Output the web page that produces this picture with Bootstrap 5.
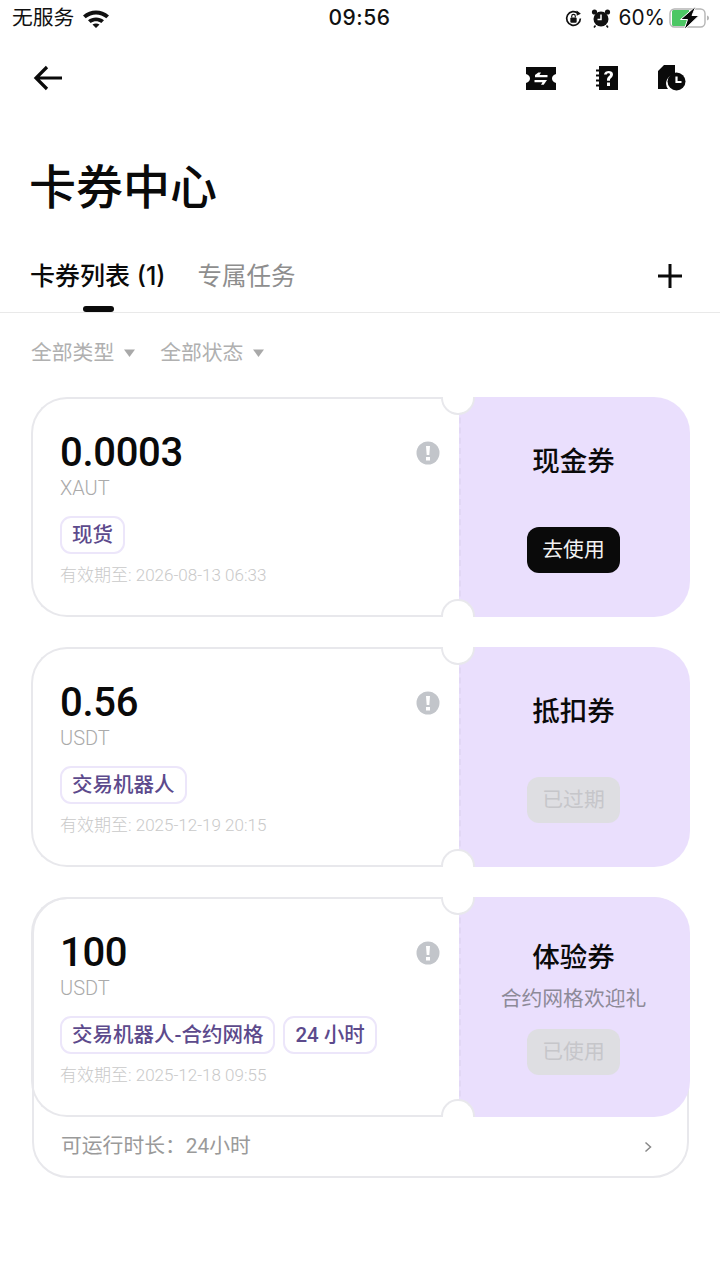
<!DOCTYPE html>
<html lang="zh-CN">
<head>
    <meta charset="UTF-8">
    <meta name="viewport" content="width=device-width, initial-scale=1.0">
    <title>卡券中心</title>
    <link href="https://cdn.jsdelivr.net/npm/bootstrap@5.3.0/dist/css/bootstrap.min.css" rel="stylesheet">
    <style>
        body {
            background-color: #fff;
            color: #0a0a0a;
            font-family: "Inter", "Noto Sans CJK SC", sans-serif;
        }
        .status-bar { height: 36px; padding: 0 9px 0 12px; font-size: 20.8px; color: #111; }
        .status-left { width: 276px; }
        .status-right { width: 280px; }
        .status-time { font-size: 21px; font-weight: 500; letter-spacing: .5px; }
        .top-nav { height: 84px; padding: 0 34px 0 33px; }
        .nav-icons { gap: 39px; }
        .page-title { font-size: 47px; font-weight: 500; line-height: 64px; margin: 35px 0 0 29px; }
        .tab-row { height: 61px; margin-top: 33px; padding: 0 37px 0 30px; border-bottom: 1px solid #e9e9e9; }
        .tab-item { font-size: 24.5px; line-height: 34px; color: #8e8e8e; margin-top: 7px; }
        .tab-item.on { font-size: 25px; color: #0a0a0a; font-weight: 500; margin-right: 32px; }
        .tab-bar { left: 83px; bottom: 0; width: 31px; height: 6px; border-radius: 3px; background: #0a0a0a; }
        .tab-plus { margin-top: 11px; }
        .filter-row { padding: 0 31px; margin-top: 25px; height: 30px; gap: 24px; font-size: 20.8px; color: #b0b0b0; }
        .filter-arrow { margin-left: 9px; }
        .coupon-list { padding: 29px 30px 0 31px; gap: 30px; }
        .coupon-wrap { border: 2px solid #e8e8ec; border-radius: 36px; margin: 0 1px; }
        .coupon { height: 220px; }
        .coupon-wrap .coupon { margin: -2px -3px 0; }
        .coupon-left { width: 428px; padding: 32px 0 0 27px; border: 2px solid #e8e8ec; border-right: 0; border-radius: 36px 0 0 36px; }
        .coupon-right { width: 231px; padding: 46px 4px 0 0; background: #eadffd; border-radius: 0 36px 36px 0; border-left: 2px dashed #e2d8f5; }
        .coupon-right.has-note { padding-top: 42px; }
        .amount { font-family: "Roboto", sans-serif; font-size: 40px; font-weight: 500; line-height: 44px; letter-spacing: -.3px; }
        .unit { font-size: 20px; line-height: 26px; color: #aaa; font-weight: 300; font-family: "Roboto", sans-serif; }
        .tag-row { margin-top: 15px; gap: 8px; }
        .tag-chip { height: 38px; padding: 0 10px; border: 2px solid #ece6fa; border-radius: 11px; font-family: "Roboto", "Noto Sans CJK SC", sans-serif; font-size: 20.5px; font-weight: 500; color: #5c4a8c; }
        .expire { margin-top: 9px; font-size: 17px; line-height: 24px; color: #c9c9c9; font-family: "Roboto", "Noto Sans CJK SC", sans-serif; font-weight: 300; }
        .warn-dot { top: 42px; right: 19px; }
        .notch { width: 34px; height: 18px; left: 410px; background: #fff; border: 2px solid #e8e8ec; }
        .notch-top { top: 0; border-top: 0; border-radius: 0 0 18px 18px; }
        .notch-bottom { bottom: 0; border-bottom: 0; border-radius: 18px 18px 0 0; }
        .kind { font-size: 27.5px; font-weight: 500; line-height: 36px; }
        .kind-note { font-size: 20.8px; line-height: 28px; color: #8d8a98; margin-top: 10px; }
        .use-btn { width: 93px; height: 46px; margin-top: 48px; border: 0; border-radius: 12px; padding: 0; font-size: 20.8px; background: #0a0a0a; color: #f2f2f2; }
        .use-btn.used { background: #dedee2; color: #c6c6ca; }
        .use-btn.tight { margin-top: 16px; }
        .coupon-foot { height: 59px; padding: 0 35px 0 27px; font-family: "Roboto", "Noto Sans CJK SC", sans-serif; font-size: 20.8px; color: #9a9a9a; }
    </style>
</head>
<body>
    <div class="status-bar d-flex align-items-center justify-content-between">
        <div class="status-left d-flex align-items-center gap-2">
            <span>无服务</span>
            <svg width="28" height="20" viewBox="0 0 28 20"><path d="M1 7.5C8.500 .8 19.500 .8 27 7.500L24.300 10.300C18.300 5.200 9.700 5.200 3.700 10.300Z M6 12.300C10.800 8.600 17.200 8.600 22 12.300L19.300 15C16 12.800 12 12.800 8.700 15Z M10.500 16.500C12.600 15.200 15.400 15.200 17.500 16.500L14 20Z" fill="#111"/></svg>
        </div>
        <span class="status-time">09:56</span>
        <div class="status-right d-flex align-items-center justify-content-end gap-1">
            <svg width="19" height="19" viewBox="0 0 18 18"><path d="M15.500 9A6.500 6.500 0 1 1 13.500 4.300" fill="none" stroke="#111" stroke-width="1.600"/><path d="M12 1.500l4 3-4 2z" fill="#111"/><rect x="6" y="8" width="6" height="5" rx="1" fill="#111"/><path d="M7.300 8V6.800a1.700 1.700 0 0 1 3.400 0V8" fill="none" stroke="#111" stroke-width="1.100"/></svg>
            <svg width="20" height="20" viewBox="0 0 20 20" class="ms-1"><circle cx="10" cy="11" r="7.500" fill="#111"/><circle cx="3.500" cy="4" r="2.600" fill="#111"/><circle cx="16.500" cy="4" r="2.600" fill="#111"/><path d="M10 6.500V11.500H6.500" fill="none" stroke="#fff" stroke-width="1.500"/><path d="M4.500 17.500l-1.500 2M15.500 17.500l1.500 2" stroke="#111" stroke-width="1.600"/></svg>
            <span class="ms-1">60%</span>
            <svg width="42" height="24" viewBox="0 0 42 24"><rect x="1" y="3" width="35" height="18" rx="4.500" fill="#fff" stroke="#b5b5b5" stroke-width="1.400"/><path d="M3 5.500a1.500 1.500 0 0 1 1.500-1.500H20V20H4.500A1.500 1.500 0 0 1 3 18.500Z" fill="#4cc764"/><path d="M38 9.500c1.500.5 2 1.500 2 2.500s-.5 2-2 2.500Z" fill="#b5b5b5"/><path d="M27 0L11.500 13.500H18.500L15 24L30 9.500H23Z" fill="#0a0a0a" stroke="#fff" stroke-width="1"/></svg>
        </div>
    </div>

    <div class="top-nav d-flex align-items-center justify-content-between">
        <svg width="30" height="26" viewBox="0 0 30 26"><path d="M14 2L3 13L14 24M3 13H29" fill="none" stroke="#0a0a0a" stroke-width="3.200"/></svg>
        <div class="nav-icons d-flex align-items-center">
            <svg width="30" height="23" viewBox="0 0 30 23"><path fill-rule="evenodd" d="M0 0H30V7C27.500 7.800 26 9.500 26 11.500S27.500 15.200 30 16V23H0V16C2.500 15.200 4 13.500 4 11.500S2.500 7.800 0 7ZM9 8V10.300H21.500V8H13.500L15 5.500H12.300ZM8.500 13V15.300H16.500L15 17.800H17.700L21 13Z" fill="#0a0a0a"/></svg>
            <svg width="24" height="24" viewBox="0 0 24 24"><path fill-rule="evenodd" d="M4 0H23V24H4V20.500H1V18.500H4V15.500H1V13.500H4V10.500H1V8.500H4V5.500H1V3.500H4ZM9 8.500H11.800C12 7 15 6.800 15 8.500C15 10 12 10.500 12 14V14.800H15V14C15 12.300 18 11.500 18 8.300C18 4 9.500 4 9 8.500ZM12 16.500V20H15V16.500Z" fill="#0a0a0a"/></svg>
            <svg width="28" height="26" viewBox="0 0 28 26"><path d="M6 0H17V9.500A9 9 0 0 0 10 24H0V6Z" fill="#0a0a0a"/><circle cx="18.500" cy="16.500" r="9" fill="#0a0a0a"/><path d="M18.500 11.500V17H23.500" fill="none" stroke="#fff" stroke-width="2.200"/></svg>
        </div>
    </div>

    <h1 class="page-title">卡券中心</h1>

    <div class="tab-row d-flex justify-content-between position-relative">
        <div class="d-flex">
            <div class="tab-item on">卡券列表 (1)</div>
            <div class="tab-item">专属任务</div>
        </div>
        <div class="tab-bar position-absolute"></div>
        <svg class="tab-plus" width="26" height="26" viewBox="0 0 26 26"><path d="M13 1V25M1 13H25" stroke="#0a0a0a" stroke-width="3"/></svg>
    </div>

    <div class="filter-row d-flex align-items-center">
        <span class="d-flex align-items-center">全部类型<svg class="filter-arrow" width="13" height="10" viewBox="0 0 13 10"><path d="M1 1.500H12L6.500 9Z" fill="#a9a9a9"/></svg></span>
        <span class="d-flex align-items-center">全部状态<svg class="filter-arrow" width="13" height="10" viewBox="0 0 13 10"><path d="M1 1.500H12L6.500 9Z" fill="#a9a9a9"/></svg></span>
    </div>

    <div class="coupon-list d-flex flex-column">
        <div class="coupon d-flex position-relative">
            <div class="coupon-left position-relative">
                <div class="amount">0.0003</div>
                <div class="unit">XAUT</div>
                <div class="tag-row d-flex"><span class="tag-chip d-flex align-items-center">现货</span></div>
                <div class="expire">有效期至: 2026-08-13 06:33</div>
                <svg class="warn-dot position-absolute" width="24" height="24" viewBox="0 0 24 24"><circle cx="12" cy="12" r="11.500" fill="#c2c5ca"/><path d="M10 5H14L13.300 14H10.700Z M10 16H14V19.500H10Z" fill="#fff"/></svg>
            </div>
            <div class="coupon-right d-flex flex-column align-items-center">
                <div class="kind">现金券</div>
                <button class="use-btn btn">去使用</button>
            </div>
            <span class="notch notch-top position-absolute"></span>
            <span class="notch notch-bottom position-absolute"></span>
        </div>

        <div class="coupon d-flex position-relative">
            <div class="coupon-left position-relative">
                <div class="amount">0.56</div>
                <div class="unit">USDT</div>
                <div class="tag-row d-flex"><span class="tag-chip d-flex align-items-center">交易机器人</span></div>
                <div class="expire">有效期至: 2025-12-19 20:15</div>
                <svg class="warn-dot position-absolute" width="24" height="24" viewBox="0 0 24 24"><circle cx="12" cy="12" r="11.500" fill="#c2c5ca"/><path d="M10 5H14L13.300 14H10.700Z M10 16H14V19.500H10Z" fill="#fff"/></svg>
            </div>
            <div class="coupon-right d-flex flex-column align-items-center">
                <div class="kind">抵扣券</div>
                <button class="use-btn used btn">已过期</button>
            </div>
            <span class="notch notch-top position-absolute"></span>
            <span class="notch notch-bottom position-absolute"></span>
        </div>

        <div class="coupon-wrap">
            <div class="coupon d-flex position-relative">
                <div class="coupon-left position-relative">
                    <div class="amount">100</div>
                    <div class="unit">USDT</div>
                    <div class="tag-row d-flex">
                        <span class="tag-chip d-flex align-items-center">交易机器人-合约网格</span>
                        <span class="tag-chip d-flex align-items-center">24 小时</span>
                    </div>
                    <div class="expire">有效期至: 2025-12-18 09:55</div>
                    <svg class="warn-dot position-absolute" width="24" height="24" viewBox="0 0 24 24"><circle cx="12" cy="12" r="11.500" fill="#c2c5ca"/><path d="M10 5H14L13.300 14H10.700Z M10 16H14V19.500H10Z" fill="#fff"/></svg>
                </div>
                <div class="coupon-right has-note d-flex flex-column align-items-center">
                    <div class="kind">体验券</div>
                    <div class="kind-note">合约网格欢迎礼</div>
                    <button class="use-btn used tight btn">已使用</button>
                </div>
                <span class="notch notch-top position-absolute"></span>
                <span class="notch notch-bottom position-absolute"></span>
            </div>
            <div class="coupon-foot d-flex align-items-center justify-content-between">
                <span>可运行时长：24小时</span>
                <svg width="8" height="12" viewBox="0 0 8 12"><path d="M1.500 1.500L6.500 6L1.500 10.500" fill="none" stroke="#888" stroke-width="1.500"/></svg>
            </div>
        </div>
    </div>

    <script src="https://cdn.jsdelivr.net/npm/bootstrap@5.3.0/dist/js/bootstrap.bundle.min.js"></script>
</body>
</html>
